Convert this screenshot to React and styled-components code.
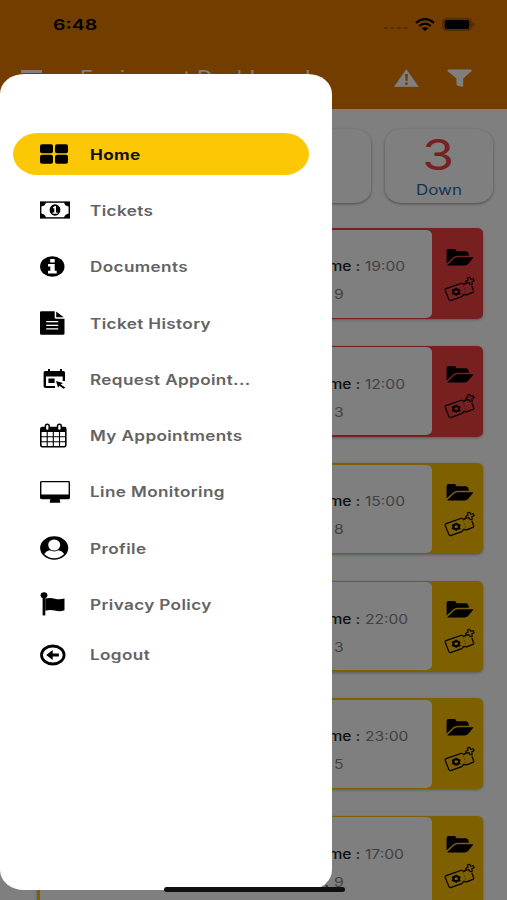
import React from "react";
import styled, { createGlobalStyle } from "styled-components";

const GlobalStyle = createGlobalStyle`
  * { box-sizing: border-box; }
  body { margin: 0; overflow: hidden; font-family: Inter, "Liberation Sans", sans-serif; }
`;

const Screen = styled.div`
  position: relative;
  width: 507px;
  height: 900px;
  overflow: hidden;
  background: #fff;
`;

const Label = styled.span`
  display: inline-block;
  flex: none;
  white-space: nowrap;
  line-height: 1;
  font-size: ${(p) => p.$size}px;
  font-weight: ${(p) => p.$weight || 400};
  color: ${(p) => p.$color};
  letter-spacing: ${(p) => p.$track || 0}px;
  transform: scaleX(${(p) => p.$stretch || 1.2});
  transform-origin: ${(p) => p.$origin || "left"} center;
`;

const Glyph = styled.svg`
  display: block;
  flex: none;
  width: ${(p) => p.$w}px;
  height: ${(p) => p.$h}px;
`;

/* ---------- top of the page ---------- */

const Header = styled.header`
  height: 108.5px;
  background: #e67a00;
`;

const StatusBar = styled.div`
  display: flex;
  align-items: center;
  justify-content: space-between;
  height: 49px;
  padding: 0 32px 0 53px;
`;

const StatusIcons = styled.div`
  display: flex;
  align-items: center;
  gap: 7px;
`;

const Toolbar = styled.div`
  display: flex;
  align-items: center;
  height: 58px;
  padding: 0 35px 0 21px;
`;

const Title = styled.div`
  flex: 1;
  padding-left: 38px;
`;

const Actions = styled.div`
  display: flex;
  align-items: center;
  gap: 28px;
`;

/* ---------- stat tiles ---------- */

const Stats = styled.section`
  display: grid;
  grid-template-columns: repeat(4, 108.5px);
  gap: 14px;
  padding: 20px 0 0 17px;
`;

const Tile = styled.div`
  display: flex;
  flex-direction: column;
  align-items: center;
  height: 74.5px;
  margin-bottom: 0.5px;
  padding-top: 4px;
  gap: 7px;
  border-radius: 17px / 14px;
  background: #fff;
  box-shadow: 0 1px 3px rgba(0, 0, 0, 0.42);
`;

/* ---------- equipment cards ---------- */

const List = styled.section`
  display: flex;
  flex-direction: column;
  gap: 26.5px;
  padding: 24.5px 24px 0 36.5px;
`;

const Card = styled.article`
  display: flex;
  flex: none;
  height: 91px;
  padding: 1.5px 0 1.5px 3.5px;
  border-radius: 6px / 5px;
  background: ${(p) => p.$tone};
  box-shadow: 0 1px 3px rgba(0, 0, 0, 0.3);
`;

const CardBody = styled.div`
  width: 392px;
  padding-top: 29px;
  border-radius: 0 6px 6px 0 / 0 5px 5px 0;
  background: #fff;
`;

const Field = styled.div`
  display: grid;
  grid-template-columns: ${(p) => p.$label}px 1fr;
  column-gap: 5px;
  align-items: center;
  height: 16px;
  margin-bottom: 12px;
`;

const FieldName = styled.div`
  display: flex;
  justify-content: flex-end;
`;

const CardActions = styled.div`
  display: flex;
  flex: 1;
  flex-direction: column;
  align-items: center;
  gap: 9px;
  padding: 18px 0 0 4px;
`;

/* ---------- overlay and drawer ---------- */

const Scrim = styled.div`
  position: absolute;
  inset: 0;
  background: rgba(0, 0, 0, 0.5);
`;

const Drawer = styled.nav`
  position: absolute;
  top: 73.5px;
  left: 0;
  width: 332px;
  height: 816.5px;
  padding: 59.5px 23.5px 0 12.5px;
  border-radius: 24px / 20px;
  background: #fff;
`;

const MenuItem = styled.a`
  display: flex;
  align-items: center;
  height: 42.3px;
  margin-bottom: ${(p) => (p.$tight ? 8.2 : 13.95)}px;
  padding-left: 27.5px;
  border-radius: 25px / 21.2px;
  background: ${(p) => (p.$active ? "#fcc805" : "transparent")};
`;

const MenuText = styled.span`
  display: flex;
  padding-top: 1.6px;
`;

const IconSlot = styled.span`
  display: flex;
  align-items: center;
  width: 50px;
`;

const HomeIndicator = styled.div`
  position: absolute;
  left: 163.5px;
  top: 887px;
  width: 181px;
  height: 5px;
  border-radius: 3px;
  background: #101010;
`;

/* ---------- icons ---------- */

const svg = (w, h, children) => (
  <Glyph $w={w} $h={h} viewBox={`0 0 ${w} ${h}`}>{children}</Glyph>
);

const GridIcon = () => svg(28, 20, <>
  <rect x="0" y="0.3" width="13" height="9" rx="2" /><rect x="15" y="0.3" width="13" height="9" rx="2" />
  <rect x="0" y="10.8" width="13" height="9" rx="2" /><rect x="15" y="10.8" width="13" height="9" rx="2" />
</>);

const MoneyIcon = () => svg(30, 18, <>
  <rect x="0.7" y="1.1" width="28.6" height="15.8" fill="none" stroke="#000" strokeWidth="1.4" />
  <path d="M1 1h5Q5.6 5 1 5.5zM29 1v4.5Q24.4 5 24 1zM1 17v-4.5q4.6.5 5 4.5zM29 17h-5q.4-4 5-4.5z" />
  <ellipse cx="15" cy="9" rx="5.4" ry="5.7" />
  <path d="M12.8 6.4l2-1.5h1.2v6.5h1.6v1.3h-5v-1.3h1.7V7l-1.3.6z" fill="#fff" />
</>);

const InfoIcon = () => svg(25, 21, <>
  <ellipse cx="12.3" cy="10.5" rx="12.2" ry="10.2" />
  <path d="M10.2 3h4.5v3.4h-4.5zM8 8h6.7v6.8h2v2.6H8v-2.6h2.3v-4.3H8z" fill="#fff" />
</>);

const FileIcon = () => svg(25, 24, <>
  <path d="M1.2.3h13.5v6.2q0 1.2 1.4 1.2h8.4v14.8q0 1.2-1.3 1.2H1.4Q0 23.7 0 22.5v-21Q0 .3 1.2.3zM16.2.5l7.5 5.8h-7.5z" />
  <path d="M6.2 10.7h12M6.2 14.3h12M6.2 17.9h12" stroke="#fff" strokeWidth="1.3" />
</>);

const RequestIcon = () => svg(26, 22, <>
  <path fillRule="evenodd" d="M8 1h2v2h10V1h2v2h1.5q1.5 0 1.5 1.5V13h-2.3V8.5H6V18h9v2H5.6q-2 0-2-1.8V4.5Q3.6 3 5.2 3H8z" />
  <path d="M8.4 10.4h6.2v4.7H8.4zM16 13l7 2-2.3 1.4 4.6 3-1.6 1.3-4.4-3-1.2 2z" />
</>);

const CalendarIcon = () => svg(27, 25, <>
  <rect x="0.8" y="4.6" width="25" height="19.2" rx="1.6" fill="none" stroke="#000" strokeWidth="1.6" />
  <path d="M1 4h25v5H1z" />
  <path d="M7.2 9v15M13.3 9v15M19.5 9v15M1 13.7h25M1 18.7h25" stroke="#000" strokeWidth="1.1" />
  <rect x="5.4" y="1.2" width="3.8" height="6.4" rx="1.8" fill="#fff" stroke="#000" strokeWidth="1.5" />
  <rect x="17.5" y="1.2" width="3.8" height="6.4" rx="1.8" fill="#fff" stroke="#000" strokeWidth="1.5" />
</>);

const MonitorIcon = () => svg(30, 24, (
  <path fillRule="evenodd" d="M1.6 1h26.8Q30 1 30 2.4v15.4q0 1.4-1.6 1.4h-8.8l.6 2.2V22.8H9.8v-1.4l.6-2.2H1.6Q0 19.2 0 17.8V2.4Q0 1 1.6 1zM1.4 2.3v12.3h27.2V2.3z" />
));

const ProfileIcon = () => svg(29, 24, <>
  <ellipse cx="14.2" cy="12" rx="13.4" ry="11" fill="#000" stroke="#000" strokeWidth="1.3" />
  <ellipse cx="14.2" cy="9" rx="6" ry="5.5" fill="#fff" />
  <path d="M4.2 18q2-3.2 5.4-3.7 4.6 2.2 9.2 0 3.4.5 5.4 3.7-4.2 4.2-10 4.2T4.2 18z" fill="#fff" />
</>);

const FlagIcon = () => svg(25, 24, <>
  <ellipse cx="4" cy="3.2" rx="3.4" ry="2.9" />
  <path d="M2.6 4h2.7v19.4H2.6z" />
  <path d="M5.3 6.6q5-1.4 9.6.1 4.4 1.3 9.6-.1v11.7q-5 1.7-9.6.2-4.8-1.3-9.6.2z" />
</>);

const LogoutIcon = () => svg(26, 22, <>
  <ellipse cx="12.8" cy="11" rx="11.3" ry="9" fill="none" stroke="#000" strokeWidth="2.8" />
  <path d="M6.2 11l6.5-5v3.5h6.2v3h-6.2V16z" />
</>);

const FolderIcon = () => svg(28, 19, <>
  <path d="M.6 15.4V3q0-2 2-2h5.6q2 0 2.2 2.2H20q2 0 2.6 2.6l.3 1.9H11.2q-2 0-3.8 1.6z" />
  <path d="M1 17.6l6.8-6.8q1.6-1.6 3.8-1.6h16l-5.3 6.6q-1.4 1.8-3.8 1.8z" />
</>);

const TicketIcon = () => svg(31, 27, <>
  <path d="M22.3 6.3l-2 2.2-2.8-1.2L2 12.6q-1.2.5-.8 1.6l3.6 9.2q.6 1.6 2.4 1l10.6-3.8 1.9-2.3 2.8.6 6.4-2.5q1.1-.5.7-1.6l-1.8-5" fill="none" stroke="#000" strokeWidth="1.2" strokeLinejoin="round" />
  <path d="M23.4 2l2.3-.8 1 2.1 2.6-.6.8 2.1-2.4 1 .7 2.2-2.4.8-1.1-2.2-2.6.7-.7-2.1 2.5-1z" fill="none" stroke="#000" strokeWidth="1.1" strokeLinejoin="round" />
  <path d="M19.4 9.4l2.4 8.2" stroke="#000" strokeOpacity="0.5" strokeWidth="0.8" strokeDasharray="1.6 1.4" />
  <ellipse cx="12.2" cy="15.8" rx="2.9" ry="2.5" fill="none" stroke="#000" strokeWidth="2.1" />
  <path d="M12.2 11.8v1.5M12.2 18.3v1.5M8 13.8l1.6.8M14.8 17l1.6.8M8 17.8l1.6-.8M14.8 14.6l1.6-.8" stroke="#000" strokeWidth="1.4" />
</>);

const WarningIcon = () => svg(25, 18, <>
  <path d="M12.3.5L24.4 17.8H.3z" fill="#fff" stroke="#fff" strokeWidth="0.5" strokeLinejoin="round" />
  <path d="M11.1 5h2.8l-.4 7h-2zM11.2 13.5h2.6v2.2h-2.6z" fill="#e67a00" />
</>);

const FilterIcon = () => svg(25, 18, (
  <path d="M.9.4h23.2q1 .6.2 1.8l-8.1 7.2v7.4q-.2 1.2-1.5 1l-4.3-1.4q-.9-.4-.9-1.2V9.4L.7 2.2Q-.1 1 .9.4z" fill="#fff" />
));

const BurgerIcon = () => svg(21, 16, (
  <path d="M0 0h21v3H0zM0 6.5h21v3H0zM0 13h21v3H0z" fill="#fff" />
));

const Carrier = () => svg(25, 10, (
  <path d="M1 8h3.4M7.6 8H11M14.2 8h3.4M20.8 8h3.4" stroke="#994f00" strokeWidth="1.6" />
));

const Wifi = () => svg(20, 14, <>
  <path d="M1 4.8q9-7.2 18 0M4.2 8q5.8-4.6 11.6 0" fill="none" stroke="#000" strokeWidth="2.2" />
  <path d="M6.7 10.3q3.3-2.3 6.6 0L10 13z" />
</>);

const Battery = () => svg(33, 13, <>
  <rect x="0.9" y="0.8" width="28.2" height="11.4" rx="3.6" fill="none" stroke="#8c4a00" strokeWidth="1.2" />
  <rect x="2.6" y="2" width="24.8" height="9" rx="2.2" />
  <path d="M30.4 4.2q2 .8 2 2.3t-2 2.3z" fill="#8c4a00" />
</>);

/* ---------- data ---------- */

const menu = [
  { name: "Home", Icon: GridIcon, active: true },
  { name: "Tickets", Icon: MoneyIcon },
  { name: "Documents", Icon: InfoIcon },
  { name: "Ticket History", Icon: FileIcon },
  { name: "Request Appoint...", Icon: RequestIcon },
  { name: "My Appointments", Icon: CalendarIcon },
  { name: "Line Monitoring", Icon: MonitorIcon },
  { name: "Profile", Icon: ProfileIcon },
  { name: "Privacy Policy", Icon: FlagIcon, tight: true },
  { name: "Logout", Icon: LogoutIcon },
];

const RED = "#f04040";
const AMBER = "#fcc000";

const cards = [
  { time: "19:00", count: "9", tone: RED },
  { time: "12:00", count: "3", tone: RED },
  { time: "15:00", count: "8", tone: AMBER },
  { time: "22:00", count: "3", tone: AMBER },
  { time: "23:00", count: "5", tone: AMBER },
  { time: "17:00", count: "9", tone: AMBER },
];

function EquipmentCard({ time, count, tone }) {
  return (
    <Card $tone={tone}>
      <CardBody>
        <Field $label={320}>
          <FieldName><Label $size={13} $weight={500} $color="#222" $origin="right">Time :</Label></FieldName>
          <Label $size={13} $color="#848484">{time}</Label>
        </Field>
        <Field $label={289}>
          <FieldName><Label $size={13} $weight={500} $color="#222" $origin="right">:</Label></FieldName>
          <Label $size={13} $color="#848484">{count}</Label>
        </Field>
      </CardBody>
      <CardActions>
        <FolderIcon />
        <TicketIcon />
      </CardActions>
    </Card>
  );
}

export default function App() {
  return (
    <Screen>
      <GlobalStyle />
      <Header>
        <StatusBar>
          <Label $size={15} $weight={600} $color="#000" $stretch={1.3}>6:48</Label>
          <StatusIcons>
            <Carrier />
            <Wifi />
            <Battery />
          </StatusIcons>
        </StatusBar>
        <Toolbar>
          <BurgerIcon />
          <Title><Label $size={20} $color="#fff" $stretch={1.1}>Equipment Dashboard</Label></Title>
          <Actions>
            <WarningIcon />
            <FilterIcon />
          </Actions>
        </Toolbar>
      </Header>

      <Stats>
        <Tile />
        <Tile />
        <Tile />
        <Tile>
          <Label $size={43} $color="#f04048" $origin="center">3</Label>
          <Label $size={14} $color="#2a6ca8" $origin="center" $stretch={1.21}>Down</Label>
        </Tile>
      </Stats>

      <List>
        {cards.map((card) => <EquipmentCard key={card.time} {...card} />)}
      </List>

      <Scrim />

      <Drawer>
        {menu.map(({ name, Icon, active, tight }) => (
          <MenuItem key={name} $active={active} $tight={tight}>
            <IconSlot><Icon /></IconSlot>
            <MenuText>
              <Label $size={14} $weight={active ? 700 : 600} $stretch={1.225} $color={active ? "#111" : "#636363"} $track={0.3}>{name}</Label>
            </MenuText>
          </MenuItem>
        ))}
      </Drawer>
      <HomeIndicator />
    </Screen>
  );
}
